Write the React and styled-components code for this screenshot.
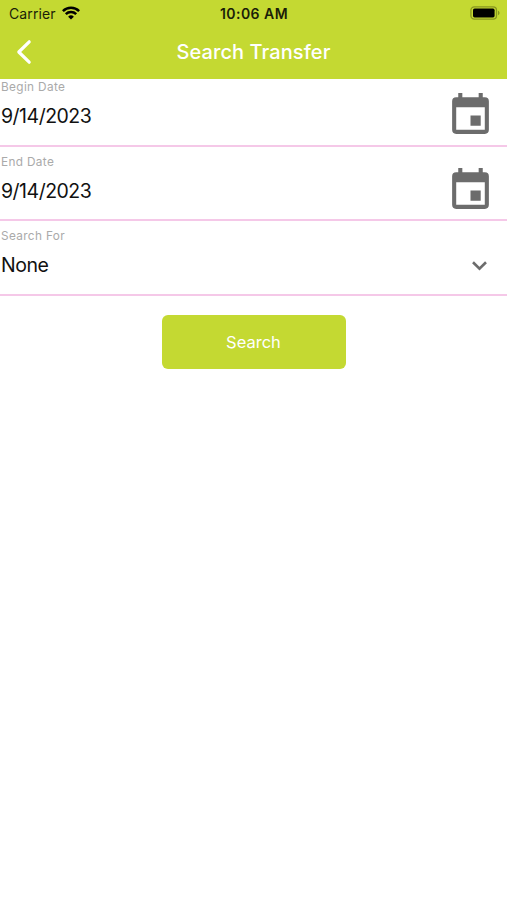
import React from "react";
import styled, { createGlobalStyle } from "styled-components";

const GlobalStyle = createGlobalStyle`
  * { box-sizing: border-box; }
  body { margin: 0; background: #fff; font-family: Inter, "Liberation Sans", sans-serif; }
`;

const Screen = styled.main`
  display: flex;
  flex-direction: column;
  min-height: 900px;
  background: #fff;
`;

const Header = styled.header`
  height: 79px;
  background: #c4d932;
`;

const StatusBar = styled.div`
  display: grid;
  grid-template-columns: 1fr auto 1fr;
  align-items: center;
  height: 27px;
  padding: 0 7px 0 9px;
  color: #1b1e08;
  font-size: 14px;
  line-height: 27px;
`;

const Carrier = styled.div`
  display: flex;
  align-items: center;
  gap: 6px;
  letter-spacing: 0.1px;

  svg {
    margin-top: -1px;
  }
`;

const Clock = styled.div`
  margin-right: 1px;
  font-weight: 600;
  letter-spacing: 0.45px;
`;

const BatterySlot = styled.div`
  display: flex;
  justify-content: flex-end;
  margin-top: -1px;
`;

const NavBar = styled.div`
  display: grid;
  grid-template-columns: 48px 1fr 48px;
  align-items: center;
  height: 50px;
`;

const BackButton = styled.button`
  display: flex;
  padding: 0 0 0 16px;
  border: 0;
  background: none;
`;

const Title = styled.h1`
  margin: 0;
  color: #fff;
  font-size: 20px;
  font-weight: 500;
  line-height: 28px;
  letter-spacing: 0.08px;
  text-align: center;
`;

const Field = styled.div`
  display: flex;
  justify-content: space-between;
  height: ${(p) => p.$height}px;
  padding: ${(p) => p.$top}px ${(p) => p.$right}px 0 1px;
  border-bottom: 2px solid #f5c8e8;
`;

const Label = styled.div`
  color: #aaa;
  font-size: 11.8px;
  line-height: 16px;
  letter-spacing: 0.35px;
`;

const Value = styled.div`
  margin-top: 8px;
  color: #111;
  font-size: 19.5px;
  line-height: 26px;
  letter-spacing: -0.5px;
`;

const IconSlot = styled.div`
  display: flex;
  align-items: center;
  height: 49px;
  margin-top: ${(p) => p.$top}px;
`;

const SearchButton = styled.button`
  align-self: center;
  width: 184px;
  height: 54px;
  margin-top: 19px;
  padding: 0;
  border: 0;
  border-radius: 6px;
  background: #c4d932;
  color: #fff;
  font: 400 16.5px/54px Inter, "Liberation Sans", sans-serif;
`;

const WifiIcon = () => (
  <svg width="18" height="14" viewBox="0 0 18 14" fill="none" stroke="#000" strokeWidth="2.5">
    <path d="M.9 5.1a11.5 11.5 0 0 1 16.2 0" />
    <path d="M3.8 8.2a7.4 7.4 0 0 1 10.4 0" />
    <path d="M9 13.6 6.1 10.7a4.1 4.1 0 0 1 5.8 0Z" fill="#000" stroke="none" />
  </svg>
);

const BatteryIcon = () => (
  <svg width="30" height="14" viewBox="0 0 30 14">
    <rect x=".9" y=".9" width="25.6" height="12.2" rx="3.4" fill="none" stroke="#87961f" strokeWidth="1.3" />
    <rect x="3" y="2.6" width="21.6" height="8.8" rx="1.6" fill="#000" />
    <path d="M28 4.8c2 .7 2 3.7 0 4.4Z" fill="#87961f" />
  </svg>
);

const BackIcon = () => (
  <svg width="16" height="26" viewBox="0 0 16 26" fill="none" stroke="#fff" strokeWidth="3.2" strokeLinecap="round" strokeLinejoin="round">
    <path d="M13.2 2.8 2.8 13l10.4 10.2" />
  </svg>
);

const CalendarIcon = () => (
  <svg width="49" height="49" viewBox="0 0 24 24" fill="#6c6c6c">
    <path d="M17 12h-5v5h5zM16 1v2H8V1H6v2H5a2 2 0 0 0-2 2v14a2 2 0 0 0 2 2h14a2 2 0 0 0 2-2V5a2 2 0 0 0-2-2h-1V1zm3 18H5V8h14z" />
  </svg>
);

const ChevronIcon = () => (
  <svg width="17" height="12" viewBox="0 0 17 12" fill="none" stroke="#6c6c6c" strokeWidth="2.6">
    <path d="m2 2.2 6.5 6.4L15 2.2" />
  </svg>
);

const FormField = ({ label, value, height, top, right = 12, iconTop, children }) => (
  <Field $height={height} $top={top} $right={right}>
    <div>
      <Label>{label}</Label>
      <Value>{value}</Value>
    </div>
    <IconSlot $top={iconTop}>{children}</IconSlot>
  </Field>
);

export default function App() {
  return (
    <>
      <GlobalStyle />
      <Screen>
        <Header>
          <StatusBar>
            <Carrier>Carrier <WifiIcon /></Carrier>
            <Clock>10:06 AM</Clock>
            <BatterySlot><BatteryIcon /></BatterySlot>
          </StatusBar>
          <NavBar>
            <BackButton aria-label="Back"><BackIcon /></BackButton>
            <Title>Search Transfer</Title>
          </NavBar>
        </Header>
        <FormField label="Begin Date" value="9/14/2023" height={68} top={0} iconTop={12.4}>
          <CalendarIcon />
        </FormField>
        <FormField label="End Date" value="9/14/2023" height={74} top={7} iconTop={12}>
          <CalendarIcon />
        </FormField>
        <FormField label="Search For" value="None" height={75} top={7} right={19} iconTop={13}>
          <ChevronIcon />
        </FormField>
        <SearchButton>Search</SearchButton>
      </Screen>
    </>
  );
}
